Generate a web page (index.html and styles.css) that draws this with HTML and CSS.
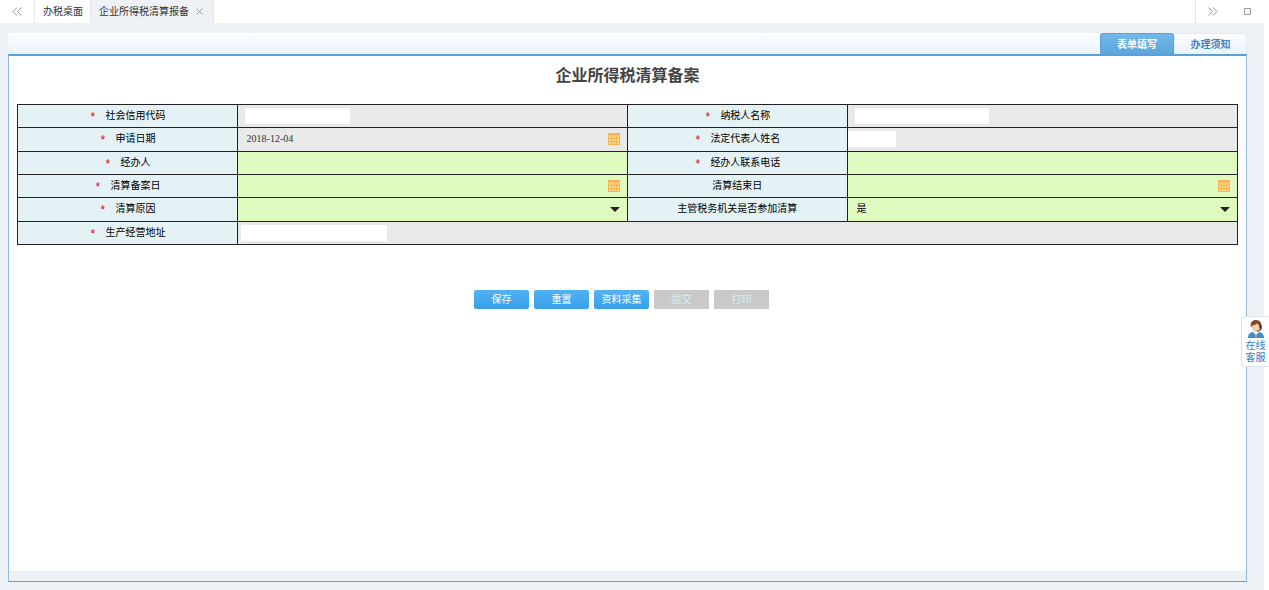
FILE: index.html
```html
<!DOCTYPE html>
<html lang="zh-CN">
<head>
<meta charset="utf-8">
<title>企业所得税清算报备</title>
<link rel="stylesheet" href="styles.css">
</head>
<body>
<svg class="defs" aria-hidden="true">
  <symbol id="cal" viewBox="0 0 12 12">
    <rect x="0.5" y="0.5" width="11" height="11" fill="#fbdc9a" stroke="#f9b450"/>
    <path d="M0 1.5H12" stroke="#f9b450" stroke-width="2"/>
    <path d="M3.5 3V11M6 3V11M8.5 3V11M1 5.5H11M1 8.5H11" stroke="#f9b450" stroke-width="1"/>
  </symbol>
</svg>
<nav class="tabs">
  <button class="tab-nav" type="button" aria-label="向左"><svg width="10" height="9" viewBox="0 0 10 9"><path d="M5 0.5L1 4.5L5 8.5M9.500 0.5L5.500 4.5L9.500 8.5"/></svg></button>
  <a class="tab" href="#">办税桌面</a>
  <div class="tab active"><a href="#">企业所得税清算报备</a><button class="close" type="button" aria-label="关闭"><svg width="7" height="7" viewBox="0 0 7 7"><path d="M0.500 0.500L6.500 6.500M6.500 0.500L0.500 6.500"/></svg></button></div>
  <div class="tab-tools">
    <button class="tool" type="button" aria-label="向右"><svg width="10" height="9" viewBox="0 0 10 9"><path d="M0.500 0.5L4.500 4.5L0.500 8.5M5 0.5L9 4.5L5 8.5"/></svg></button>
    <button class="tool" type="button" aria-label="最大化"><svg width="7" height="7" viewBox="0 0 7 7"><path d="M0.500 0.500H6.500V6.500H0.500Z"/></svg></button>
  </div>
</nav>
<main class="page">
  <div class="panel-head">
    <button class="ptab on" type="button">表单填写</button>
    <button class="ptab" type="button">办理须知</button>
  </div>
  <section class="panel">
    <form class="sheet">
      <h1>企业所得税清算备案</h1>
      <table>
        <colgroup><col class="c-label"><col class="c-field"><col class="c-label"><col class="c-field"></colgroup>
        <tr>
          <th class="req"><label for="code">社会信用代码</label></th>
          <td class="ro"><div class="cell"><input class="mask code" id="code" readonly></div></td>
          <th class="req"><label for="name">纳税人名称</label></th>
          <td class="ro"><div class="cell"><input class="mask name" id="name" readonly></div></td>
        </tr>
        <tr>
          <th class="req"><label for="date">申请日期</label></th>
          <td class="ro"><div class="cell field"><input class="date" id="date" value="2018-12-04" readonly><button class="pick" type="button" aria-label="选择日期"><svg width="12" height="12"><use href="#cal"/></svg></button></div></td>
          <th class="req"><label for="legal">法定代表人姓名</label></th>
          <td class="ro"><div class="cell"><input class="mask legal" id="legal" readonly></div></td>
        </tr>
        <tr>
          <th class="req"><label for="agent">经办人</label></th>
          <td><div class="cell field"><input id="agent"></div></td>
          <th class="req"><label for="tel">经办人联系电话</label></th>
          <td><div class="cell field"><input id="tel"></div></td>
        </tr>
        <tr>
          <th class="req"><label for="start">清算备案日</label></th>
          <td><div class="cell field"><input class="date" id="start"><button class="pick" type="button" aria-label="选择日期"><svg width="12" height="12"><use href="#cal"/></svg></button></div></td>
          <th><label for="end">清算结束日</label></th>
          <td><div class="cell field"><input class="date" id="end"><button class="pick" type="button" aria-label="选择日期"><svg width="12" height="12"><use href="#cal"/></svg></button></div></td>
        </tr>
        <tr>
          <th class="req"><label for="reason">清算原因</label></th>
          <td><div class="cell field drop"><select id="reason"><option></option></select></div></td>
          <th><label for="join">主管税务机关是否参加清算</label></th>
          <td><div class="cell field drop"><select id="join"><option>是</option><option>否</option></select></div></td>
        </tr>
        <tr>
          <th class="req"><label for="addr">生产经营地址</label></th>
          <td class="ro" colspan="3"><div class="cell"><input class="mask addr" id="addr" readonly></div></td>
        </tr>
      </table>
      <div class="actions">
        <button type="button">保存</button>
        <button type="button">重置</button>
        <button type="button">资料采集</button>
        <button type="button" disabled>提交</button>
        <button type="button" disabled>打印</button>
      </div>
    </form>
  </section>
</main>
<a class="service" href="#">
  <svg width="18" height="18" viewBox="0 0 18 18">
    <path d="M1 18C1 14 3 12.500 6 12L9 14L12 12C15 12.500 17 14 17 18Z" fill="#3d8fd6"/>
    <path d="M6.500 11L9 17L11.500 11Z" fill="#fff"/>
    <path d="M8.300 14H9.700L10 17.500H8Z" fill="#e0873f"/>
    <ellipse cx="9" cy="7" rx="4" ry="5" fill="#f6cfa6"/>
    <path d="M4 8C2.500 2.500 5.500 0 9 0C13 0 15.500 3 14 8L12.800 8.500C13 5.500 11.500 4.500 9.500 3.500C8.500 5 6.500 5.300 5 5.500Z" fill="#7a4a2b"/>
    <path d="M13.800 5V9C13.500 10.500 12 11 10 11" fill="none" stroke="#333" stroke-width="1.200"/>
    <rect x="12.500" y="5" width="2" height="4" rx="1" fill="#333"/>
  </svg>
  <span>在线</span><span>客服</span>
</a>
</body>
</html>
```
FILE: styles.css
```css
* { box-sizing: border-box; }
body {
  margin: 0;
  min-height: 100vh;
  display: flex;
  flex-direction: column;
  padding-right: 5px;
  background: #fff;
  color: #000;
  font: 10px/14px "Liberation Sans", "Noto Sans CJK SC", sans-serif;
}
a { color: inherit; text-decoration: none; }
button, input, select {
  margin: 0;
  padding: 0;
  border: 0;
  background: none;
  color: inherit;
  font: inherit;
}
.defs { position: absolute; width: 0; height: 0; }

.tabs { display: flex; height: 23px; color: #333; }
.tabs svg { display: block; fill: none; stroke: #999; }
.tab-nav { display: flex; align-items: center; justify-content: center; width: 35px; border-right: 1px solid #e6e9ec; }
.tab { display: flex; align-items: center; padding: 0 7px 0 8px; }
.tab.active { gap: 7px; padding: 0 10px 0 8px; background: #eef2f6; border-left: 1px solid #e6e9ec; border-right: 1px solid #e2e5e8; }
.tab-tools { display: flex; margin-left: auto; border-left: 1px solid #e2e5e8; }
.tool { display: flex; align-items: center; justify-content: center; width: 34px; }

.page { flex: 1; display: flex; flex-direction: column; padding: 10px 17px 8px 8px; background: #eef2f6; }
.panel-head { display: flex; justify-content: flex-end; height: 21px; background: linear-gradient(#fefeff, #e9f3fb); }
.ptab { width: 73px; padding-top: 2px; color: #3c87c8; font-weight: 700; border: 1px solid #dcebf7; border-bottom: 0; }
.ptab.on { width: 74px; color: #fff; border-color: #5ba3da; background: linear-gradient(#74b8e8, #5aa6de); border-radius: 3px 3px 0 0; }
.panel { flex: 1; display: flex; padding-bottom: 10px; border: 1px solid #8fbbe0; border-top: 2px solid #5b9fd8; border-bottom-color: #6a9fcc; }
.sheet { flex: 1; padding: 8px; background: #fff; }
h1 { margin: 0 0 16px; color: #444; font-size: 16px; line-height: 24px; text-align: center; }

table { width: 100%; height: 141px; border-collapse: collapse; table-layout: fixed; }
.c-label { width: 18%; }
.c-field { width: 32%; }
th, td { padding: 0; border: 1px solid #222; }
th { background: #e4f2f6; font-weight: 400; text-align: center; }
.req label::before { content: "*"; margin-right: 9px; color: #e60012; font: 12px/10px "Liberation Mono", monospace; vertical-align: -2px; }
td { background: #defabe; }
td.ro { background: #e9e9e9; }
.cell { display: flex; align-items: center; height: 22px; }
.field { padding: 0 7px 0 9px; }
.field input, .field select { flex: 1; min-width: 0; height: 18px; }
.field .date { font: 10px/18px "Liberation Serif", serif; color: #333; }
.pick svg { display: block; }
.drop select { appearance: none; }
.drop::after { content: ""; border: 5px solid transparent; border-top-color: #222; border-bottom: 0; }
.mask { height: 16px; background: #fff; }
.code { width: 105px; margin-left: 7px; }
.name { width: 134px; margin-left: 7px; }
.legal { width: 48px; }
.addr { width: 146px; margin-left: 3px; }

.actions { display: flex; justify-content: center; gap: 5px; margin-top: 45px; padding-right: 12px; }
.actions button { width: 55px; height: 19px; border-radius: 2px; background: linear-gradient(#52b2f2, #36a0ea); color: #fff; }
.actions button:disabled { background: #c9c9c9; color: #d5f1f1; border-radius: 0; }

.service {
  position: fixed;
  right: 0;
  top: 316px;
  display: flex;
  flex-direction: column;
  align-items: center;
  width: 28px;
  padding: 3px 0 2px;
  border: 1px solid #dde3e8;
  border-right: 0;
  border-radius: 4px 0 0 4px;
  background: #fff;
  color: #2f7cc0;
  line-height: 12px;
}
.service svg { margin-bottom: 2px; }
```
